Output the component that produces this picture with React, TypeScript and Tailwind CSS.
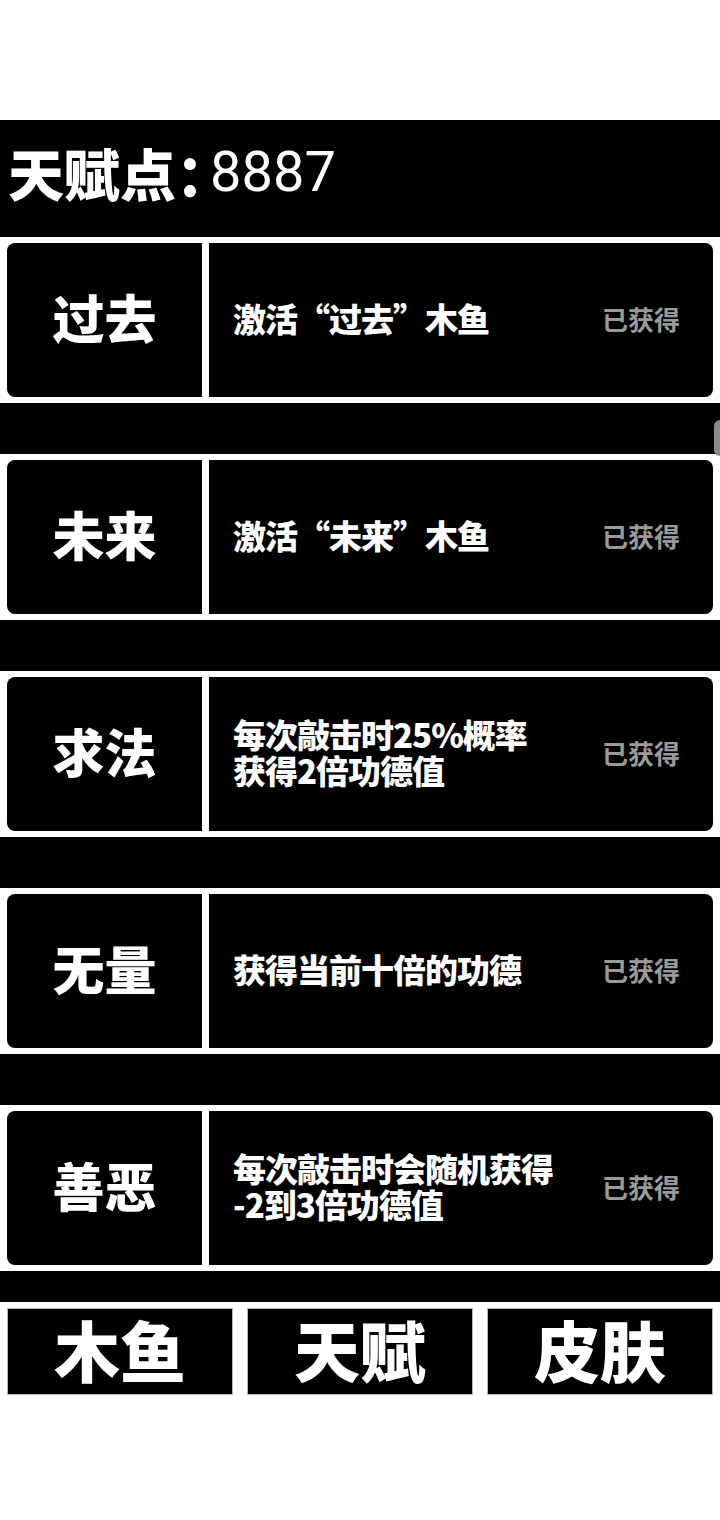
const cjk = { fontFamily: '"Noto Sans CJK SC", "Noto Sans", sans-serif' }

interface Talent {
  name: string
  desc: string[]
}

const talents: Talent[] = [
  { name: "过去", desc: ["激活“过去”木鱼"] },
  { name: "未来", desc: ["激活“未来”木鱼"] },
  { name: "求法", desc: ["每次敲击时25%概率", "获得2倍功德值"] },
  { name: "无量", desc: ["获得当前十倍的功德"] },
  { name: "善恶", desc: ["每次敲击时会随机获得", "-2到3倍功德值"] },
]

function TalentRow({ talent }: { talent: Talent }) {
  return (
    <div className="flex gap-[7px] bg-white px-[7px] py-[6px]">
      <div className="flex h-[154px] w-[195px] items-center justify-center rounded-l-lg bg-black pb-[6px]">
        <span className="text-[52px] font-black leading-none text-white" style={cjk}>
          {talent.name}
        </span>
      </div>
      <div className="flex flex-1 items-center justify-between rounded-r-lg bg-black pb-[4px] pl-[24px] pr-[33px]">
        <div className="flex flex-col text-[33px] font-black leading-[36px] tracking-[-1px] text-white" style={cjk}>
          {talent.desc.map((line) => (
            <span key={line} className="whitespace-nowrap">{line}</span>
          ))}
        </div>
        <span className="text-[26px] font-bold text-[#9a9a9a]" style={cjk}>
          已获得
        </span>
      </div>
    </div>
  )
}

export default function App() {
  return (
    <div className="relative min-h-[1520px] bg-white pt-[120px]">
      <div className="flex h-[117px] items-center bg-black pb-[14px] pl-[8px] text-white">
        <span className="text-[56px] font-black leading-none" style={cjk}>
          天赋点<span className="tracking-[-22px]">：</span>
        </span>
        <span
          className="text-[56px] leading-none"
          style={{ fontFamily: 'Roboto, "Noto Sans CJK SC", sans-serif' }}
        >
          8887
        </span>
      </div>

      {talents.map((t, i) => (
        <div key={t.name}>
          <TalentRow talent={t} />
          <div className={i === talents.length - 1 ? "h-[31px] bg-black" : "h-[51px] bg-black"} />
        </div>
      ))}

      <div className="flex gap-[14px] bg-white px-[7px] py-[6px]">
        {["木鱼", "天赋", "皮肤"].map((label) => (
          <button
            key={label}
            className="flex h-[87px] flex-1 items-center justify-center border border-[#b5b5b5] bg-black pb-[8px]"
          >
            <span className="text-[66px] font-black leading-none text-white" style={cjk}>
              {label}
            </span>
          </button>
        ))}
      </div>

      <div className="absolute right-0 top-[420px] h-[36px] w-[6px] rounded-l-md bg-[#8a8a8a]" />
    </div>
  )
}
